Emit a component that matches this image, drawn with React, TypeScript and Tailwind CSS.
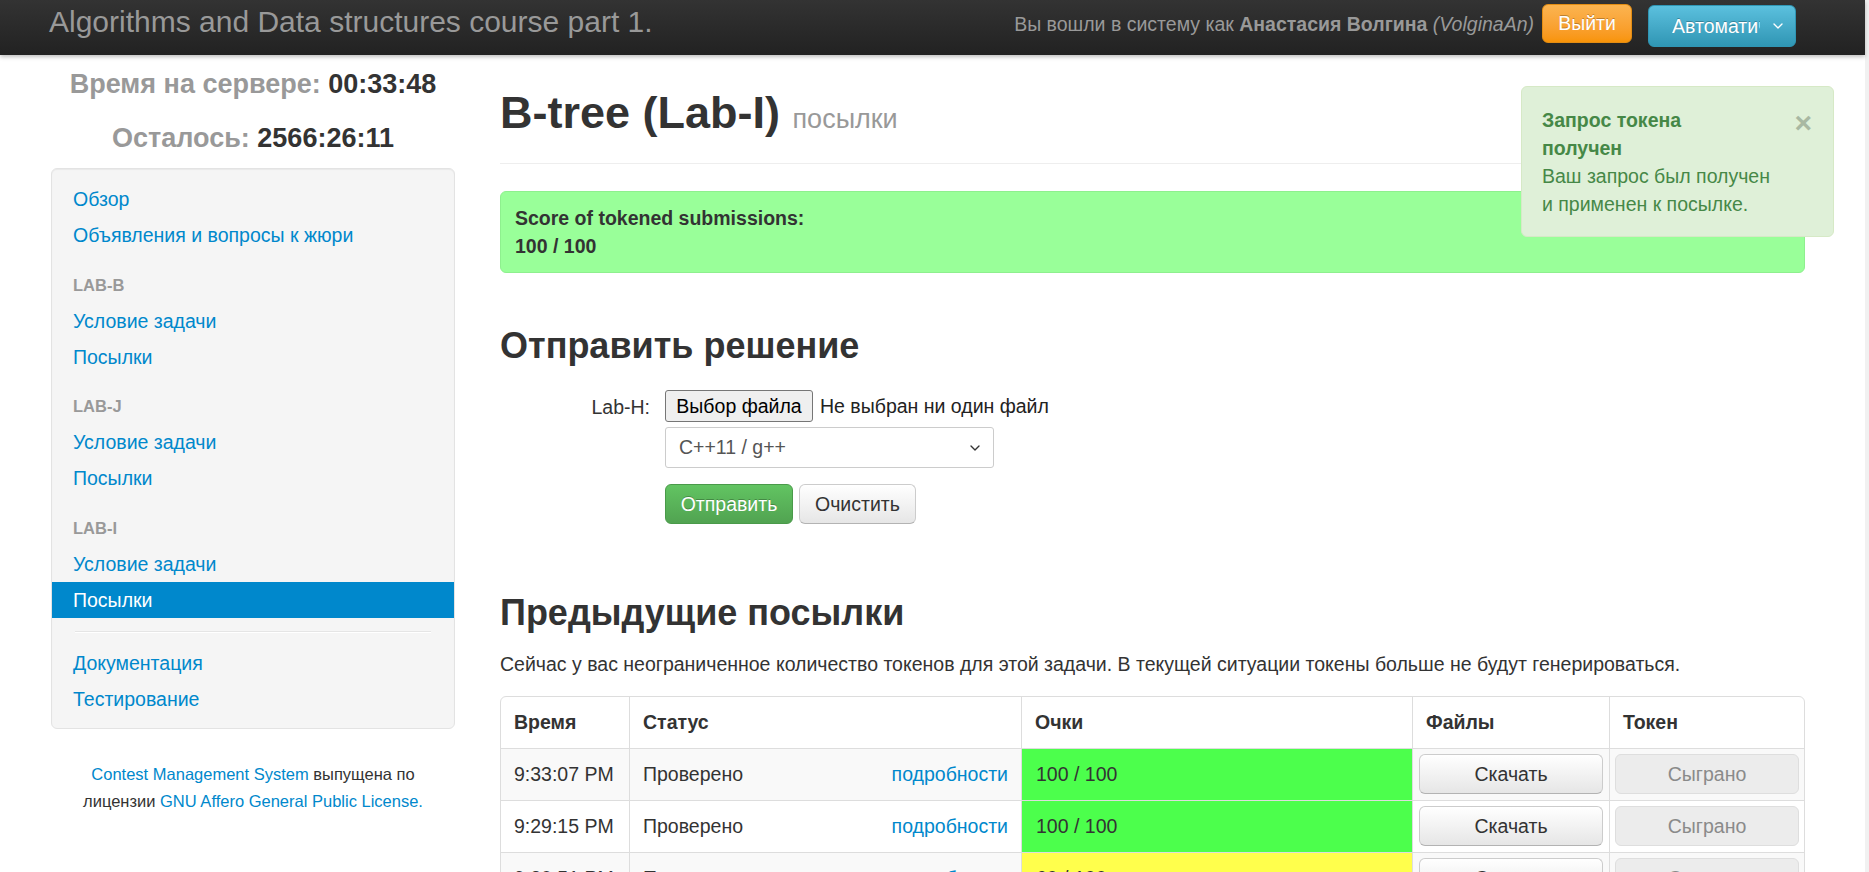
import { ChevronDown } from 'lucide-react';

type NavItem = { label: string; active?: boolean };

const navGroups: { header?: string; items: NavItem[] }[] = [
  { items: [{ label: 'Обзор' }, { label: 'Объявления и вопросы к жюри' }] },
  { header: 'Lab-B', items: [{ label: 'Условие задачи' }, { label: 'Посылки' }] },
  { header: 'Lab-J', items: [{ label: 'Условие задачи' }, { label: 'Посылки' }] },
  { header: 'Lab-I', items: [{ label: 'Условие задачи' }, { label: 'Посылки', active: true }] },
];

const submissions = [
  { time: '9:33:07 PM', score: '100 / 100', full: true },
  { time: '9:29:15 PM', score: '100 / 100', full: true },
  { time: '9:20:51 PM', score: '60 / 100', full: false },
];

function Navbar() {
  return (
    <div className="h-[55px] flex items-start justify-between pl-[49px] pr-[69px] bg-gradient-to-b from-[#333] to-[#222] shadow-[0_2px_4px_rgba(0,0,0,0.25)] relative z-10">
      <div className="mt-[7px] text-[30px] leading-[30px] text-[#999]">
        Algorithms and Data structures course part 1.
      </div>
      <div className="flex items-start">
        <div className="mt-[11px] text-[#999] leading-[27px] whitespace-nowrap">
          Вы вошли в систему как <b>Анастасия Волгина</b> <i>(VolginaAn)</i>
        </div>
        <button className="ml-[8px] mt-[4px] h-[39px] w-[90px] rounded-[6px] border border-[#e38d13] bg-gradient-to-b from-[#fbb450] to-[#f89406] text-white [text-shadow:0_-1px_0_rgba(0,0,0,0.25)]">
          Выйти
        </button>
        <div className="ml-[16px] mt-[5px] h-[42px] w-[148px] rounded-[6px] border border-[#2f96b4] bg-gradient-to-b from-[#5bc0de] to-[#2f96b4] text-white flex items-center [text-shadow:0_-1px_0_rgba(0,0,0,0.25)]">
          <span className="ml-[23px] w-[88px] overflow-hidden whitespace-nowrap">Автоматически</span>
          <ChevronDown size={16} strokeWidth={2} className="ml-[10px]" />
        </div>
      </div>
    </div>
  );
}

function Sidebar() {
  return (
    <aside className="w-[404px] shrink-0">
      <div className="pt-[2px] text-center text-[27px] leading-[54px] font-bold">
        <div>
          <span className="text-[#999]">Время на сервере:</span> 00:33:48
        </div>
        <div>
          <span className="text-[#999]">Осталось:</span> 2566:26:11
        </div>
      </div>

      <div className="mt-[3px] bg-[#f5f5f5] border border-[#e3e3e3] rounded-[6px] shadow-[inset_0_1px_1px_rgba(0,0,0,0.05)] pt-[12px] pb-[11px]">
        {navGroups.map((group, gi) => (
          <div key={gi}>
            {group.header && (
              <div className="mt-[13.5px] h-[36px] leading-[36px] px-[21px] text-[16.5px] font-bold uppercase text-[#999]">
                {group.header}
              </div>
            )}
            {group.items.map((item, ii) => (
              <div
                key={ii}
                className={`h-[36px] leading-[36px] px-[21px] ${
                  item.active ? 'bg-[#0088cc] text-white' : 'text-[#0088cc]'
                }`}
              >
                {item.label}
              </div>
            ))}
          </div>
        ))}
        <div className="mt-[13.5px] mb-[11.5px] mx-[23px] h-px bg-[#e5e5e5] border-b border-white box-content" />
        <div className="h-[36px] leading-[36px] px-[21px] text-[#0088cc]">Документация</div>
        <div className="h-[36px] leading-[36px] px-[21px] text-[#0088cc]">Тестирование</div>
      </div>

      {/* Footer */}
      <div className="mt-[32px] text-center text-[16.5px] leading-[27px]">
        <span className="text-[#0088cc]">Contest Management System</span> выпущена по
        <br />
        лицензии <span className="text-[#0088cc]">GNU Affero General Public License.</span>
      </div>
    </aside>
  );
}

function SubmitForm() {
  return (
    <div>
      <div className="mt-[17px] flex items-center h-[32px]">
        <div className="w-[150px] text-right pt-[2px]">Lab-H:</div>
        <div className="ml-[15px] flex items-center">
          <div className="h-[32px] w-[148px] flex items-center justify-center bg-[#efefef] border border-[#767676] rounded-[3px] text-black">
            Выбор файла
          </div>
          <span className="ml-[7px] text-[#222]">Не выбран ни один файл</span>
        </div>
      </div>
      <div className="ml-[165px] mt-[5px] h-[41px] w-[329px] border border-[#ccc] rounded-[3px] bg-white flex items-center justify-between pl-[13px] pr-[10px] text-[#555]">
        <span>C++11 / g++</span>
        <ChevronDown size={16} strokeWidth={2} className="text-[#333]" />
      </div>
      <div className="ml-[165px] mt-[16px] flex gap-[6px]">
        <button className="h-[40px] w-[128px] rounded-[6px] border border-[#4a9a4a] bg-gradient-to-b from-[#62c462] to-[#51a351] text-white [text-shadow:0_-1px_0_rgba(0,0,0,0.25)]">
          Отправить
        </button>
        <button className="h-[40px] w-[117px] rounded-[6px] border border-[#ccc] border-b-[#b3b3b3] bg-gradient-to-b from-white to-[#e6e6e6] text-[#333]">
          Очистить
        </button>
      </div>
    </div>
  );
}

function SubmissionsTable() {
  const th = 'py-3 px-[13px] text-left font-bold leading-[27px]';
  return (
    <table className="mt-[18px] w-full table-fixed border-separate border-spacing-0 border border-[#ddd] rounded-[6px]">
      <colgroup>
        <col className="w-[128px]" />
        <col className="w-[392px]" />
        <col className="w-[391px]" />
        <col className="w-[197px]" />
        <col />
      </colgroup>
      <thead>
        <tr>
          <th className={th}>Время</th>
          <th className={`${th} border-l border-[#ddd]`}>Статус</th>
          <th className={`${th} border-l border-[#ddd]`}>Очки</th>
          <th className={`${th} border-l border-[#ddd]`}>Файлы</th>
          <th className={`${th} border-l border-[#ddd]`}>Токен</th>
        </tr>
      </thead>
      <tbody>
        {submissions.map((s, i) => {
          const stripe = i % 2 === 0 ? 'bg-[#f9f9f9]' : 'bg-white';
          return (
            <tr key={i}>
              <td className={`${stripe} border-t border-[#ddd] py-3 px-[13px] leading-[27px] whitespace-nowrap`}>
                {s.time}
              </td>
              <td className={`${stripe} border-t border-l border-[#ddd] py-3 px-[13px] leading-[27px]`}>
                <div className="flex justify-between">
                  <span>Проверено</span>
                  <span className="text-[#0088cc]">подробности</span>
                </div>
              </td>
              <td
                className={`${s.full ? 'bg-[#4cff4c]' : 'bg-[#ffff4c]'} border-t border-l border-[#ddd] py-3 px-[14px] leading-[27px]`}
              >
                {s.score}
              </td>
              <td className={`${stripe} border-t border-l border-[#ddd] px-[6px] py-[4px]`}>
                <button className="w-full h-[40px] rounded-[6px] border border-[#ccc] border-b-[#b3b3b3] bg-gradient-to-b from-white to-[#e6e6e6] text-[#333]">
                  Скачать
                </button>
              </td>
              <td className={`${stripe} border-t border-l border-[#ddd] px-[5px] py-[4px]`}>
                <button className="w-full h-[40px] rounded-[6px] border border-[#dedede] bg-[#ececec] text-[#8a8a8a]">
                  Сыграно
                </button>
              </td>
            </tr>
          );
        })}
      </tbody>
    </table>
  );
}

export default function App() {
  return (
    <div className="h-screen overflow-hidden flex bg-white text-[#333] text-[19.5px] leading-[27px] font-['Liberation_Sans',Arial,sans-serif] relative">
      <div className="flex-1 min-w-0">
        <Navbar />
        <div className="flex pl-[51px] pr-[60px] gap-[45px]">
          <Sidebar />
          <main className="flex-1 min-w-0 pt-[31px]">
            {/* Page header */}
            <div className="pb-[17px] border-b border-[#eee]">
              <h1 className="text-[45px] leading-[54px] font-bold">
                B-tree (Lab-I) <small className="text-[27px] font-normal text-[#999]">посылки</small>
              </h1>
            </div>

            <div className="mt-[27px] bg-[#99ff99] border border-[#8ef08e] rounded-[6px] px-[14px] py-[12px] leading-[28px] font-bold">
              <div>Score of tokened submissions:</div>
              <div>100 / 100</div>
            </div>

            <h2 className="mt-[46px] text-[36px] leading-[54px] font-bold">Отправить решение</h2>
            <SubmitForm />

            <h2 className="mt-[61.5px] text-[36px] leading-[54px] font-bold">Предыдущие посылки</h2>
            <p className="mt-[11px]">
              Сейчас у вас неограниченное количество токенов для этой задачи. В текущей ситуации токены больше не будут генерироваться.
            </p>
            <SubmissionsTable />
          </main>
        </div>
      </div>
      <div className="w-[4px] shrink-0 bg-[#f1f1f1]" />

      {/* Notification */}
      <div className="absolute top-[86px] right-[35px] w-[313px] bg-[#dff0d8] border border-[#d6e9c6] rounded-[6px] pl-[20px] pr-[21px] pt-[19px] pb-[18px] text-[#468847] leading-[28px] flex justify-between">
        <div className="whitespace-nowrap">
          <div className="font-bold">Запрос токена</div>
          <div className="font-bold">получен</div>
          <div>Ваш запрос был получен</div>
          <div>и применен к посылке.</div>
        </div>
        <span className="mt-[2px] text-[30px] leading-[30px] font-bold text-[#a8b8a2]">×</span>
      </div>
    </div>
  );
}
